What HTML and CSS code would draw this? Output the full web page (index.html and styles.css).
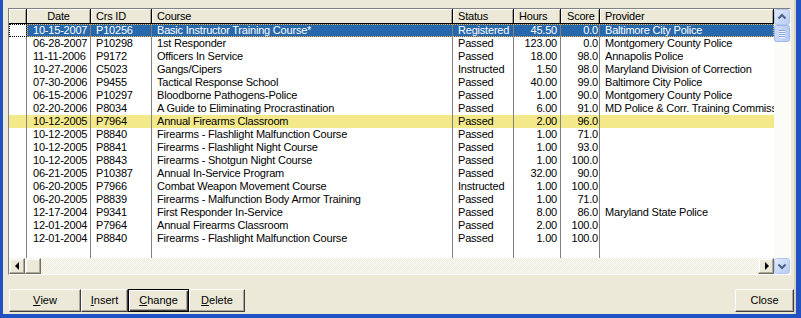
FILE: index.html
```html
<!DOCTYPE html>
<html>
<head>
<meta charset="utf-8">
<link rel="stylesheet" href="styles.css">
</head>
<body>
<div class="window">
  <div class="panel">
    <div class="grid">
      <div class="view">
        <div class="hdr">
          <div class="h w-ind"></div>
          <div class="h w-date center">Date</div>
          <div class="h w-id">Crs ID</div>
          <div class="h w-course">Course</div>
          <div class="h w-status">Status</div>
          <div class="h w-hours">Hours</div>
          <div class="h w-score">Score</div>
          <div class="h w-prov">Provider</div>
        </div>
        <div class="body">
          <div class="row sel"><div class="ind"></div><div class="data"><div class="c w-date">10-15-2007</div><div class="c w-id">P10256</div><div class="c w-course">Basic Instructor Training Course*</div><div class="c w-status">Registered</div><div class="c w-hours num">45.50</div><div class="c w-score num">0.0</div><div class="c w-prov">Baltimore City Police</div></div></div>
          <div class="row"><div class="ind"></div><div class="data"><div class="c w-date">06-28-2007</div><div class="c w-id">P10298</div><div class="c w-course">1st Responder</div><div class="c w-status">Passed</div><div class="c w-hours num">123.00</div><div class="c w-score num">0.0</div><div class="c w-prov">Montgomery County Police</div></div></div>
          <div class="row"><div class="ind"></div><div class="data"><div class="c w-date">11-11-2006</div><div class="c w-id">P9172</div><div class="c w-course">Officers In Service</div><div class="c w-status">Passed</div><div class="c w-hours num">18.00</div><div class="c w-score num">98.0</div><div class="c w-prov">Annapolis Police</div></div></div>
          <div class="row"><div class="ind"></div><div class="data"><div class="c w-date">10-27-2006</div><div class="c w-id">C5023</div><div class="c w-course">Gangs/Cipers</div><div class="c w-status">Instructed</div><div class="c w-hours num">1.50</div><div class="c w-score num">98.0</div><div class="c w-prov">Maryland Division of Correction</div></div></div>
          <div class="row"><div class="ind"></div><div class="data"><div class="c w-date">07-30-2006</div><div class="c w-id">P9455</div><div class="c w-course">Tactical Response School</div><div class="c w-status">Passed</div><div class="c w-hours num">40.00</div><div class="c w-score num">99.0</div><div class="c w-prov">Baltimore City Police</div></div></div>
          <div class="row"><div class="ind"></div><div class="data"><div class="c w-date">06-15-2006</div><div class="c w-id">P10297</div><div class="c w-course">Bloodborne Pathogens-Police</div><div class="c w-status">Passed</div><div class="c w-hours num">1.00</div><div class="c w-score num">90.0</div><div class="c w-prov">Montgomery County Police</div></div></div>
          <div class="row"><div class="ind"></div><div class="data"><div class="c w-date">02-20-2006</div><div class="c w-id">P8034</div><div class="c w-course">A Guide to Eliminating Procrastination</div><div class="c w-status">Passed</div><div class="c w-hours num">6.00</div><div class="c w-score num">91.0</div><div class="c w-prov">MD Police &amp; Corr. Training Commission</div></div></div>
          <div class="row hl"><div class="ind"></div><div class="data"><div class="c w-date">10-12-2005</div><div class="c w-id">P7964</div><div class="c w-course">Annual Firearms Classroom</div><div class="c w-status">Passed</div><div class="c w-hours num">2.00</div><div class="c w-score num">96.0</div><div class="c w-prov"></div></div></div>
          <div class="row"><div class="ind"></div><div class="data"><div class="c w-date">10-12-2005</div><div class="c w-id">P8840</div><div class="c w-course">Firearms - Flashlight Malfunction Course</div><div class="c w-status">Passed</div><div class="c w-hours num">1.00</div><div class="c w-score num">71.0</div><div class="c w-prov"></div></div></div>
          <div class="row"><div class="ind"></div><div class="data"><div class="c w-date">10-12-2005</div><div class="c w-id">P8841</div><div class="c w-course">Firearms - Flashlight Night Course</div><div class="c w-status">Passed</div><div class="c w-hours num">1.00</div><div class="c w-score num">93.0</div><div class="c w-prov"></div></div></div>
          <div class="row"><div class="ind"></div><div class="data"><div class="c w-date">10-12-2005</div><div class="c w-id">P8843</div><div class="c w-course">Firearms - Shotgun Night Course</div><div class="c w-status">Passed</div><div class="c w-hours num">1.00</div><div class="c w-score num">100.0</div><div class="c w-prov"></div></div></div>
          <div class="row"><div class="ind"></div><div class="data"><div class="c w-date">06-21-2005</div><div class="c w-id">P10387</div><div class="c w-course">Annual In-Service Program</div><div class="c w-status">Passed</div><div class="c w-hours num">32.00</div><div class="c w-score num">90.0</div><div class="c w-prov"></div></div></div>
          <div class="row"><div class="ind"></div><div class="data"><div class="c w-date">06-20-2005</div><div class="c w-id">P7966</div><div class="c w-course">Combat Weapon Movement Course</div><div class="c w-status">Instructed</div><div class="c w-hours num">1.00</div><div class="c w-score num">100.0</div><div class="c w-prov"></div></div></div>
          <div class="row"><div class="ind"></div><div class="data"><div class="c w-date">06-20-2005</div><div class="c w-id">P8839</div><div class="c w-course">Firearms - Malfunction Body Armor Training</div><div class="c w-status">Passed</div><div class="c w-hours num">1.00</div><div class="c w-score num">71.0</div><div class="c w-prov"></div></div></div>
          <div class="row"><div class="ind"></div><div class="data"><div class="c w-date">12-17-2004</div><div class="c w-id">P9341</div><div class="c w-course">First Responder In-Service</div><div class="c w-status">Passed</div><div class="c w-hours num">8.00</div><div class="c w-score num">86.0</div><div class="c w-prov">Maryland State Police</div></div></div>
          <div class="row"><div class="ind"></div><div class="data"><div class="c w-date">12-01-2004</div><div class="c w-id">P7964</div><div class="c w-course">Annual Firearms Classroom</div><div class="c w-status">Passed</div><div class="c w-hours num">2.00</div><div class="c w-score num">100.0</div><div class="c w-prov"></div></div></div>
          <div class="row"><div class="ind"></div><div class="data"><div class="c w-date">12-01-2004</div><div class="c w-id">P8840</div><div class="c w-course">Firearms - Flashlight Malfunction Course</div><div class="c w-status">Passed</div><div class="c w-hours num">1.00</div><div class="c w-score num">100.0</div><div class="c w-prov"></div></div></div>
          <div class="row fill"><div class="ind"></div><div class="data"><div class="c w-date"></div><div class="c w-id"></div><div class="c w-course"></div><div class="c w-status"></div><div class="c w-hours"></div><div class="c w-score"></div><div class="c w-prov"></div></div></div>
        </div>
      </div>
      <div class="vscroll">
        <svg class="xpbtn" width="16" height="16" viewBox="0 0 16 16">
          <defs><linearGradient id="gu" x1="0" y1="0" x2="1" y2="1"><stop offset="0" stop-color="#e3ebfd"/><stop offset="1" stop-color="#b4caf5"/></linearGradient></defs>
          <rect x="0.5" y="0.5" width="15" height="15" rx="2" fill="url(#gu)" stroke="#b1c5ee"/>
          <path d="M4.5 9.5 L8 6 L11.5 9.5" fill="none" stroke="#4d6185" stroke-width="2"/>
        </svg>
        <svg class="xpthumb" width="16" height="17" viewBox="0 0 16 17">
          <defs><linearGradient id="gt" x1="0" y1="0" x2="1" y2="0"><stop offset="0" stop-color="#cad9fa"/><stop offset="0.5" stop-color="#c4d5fa"/><stop offset="1" stop-color="#b2c8f4"/></linearGradient></defs>
          <rect x="0.5" y="0.5" width="15" height="16" rx="2" fill="url(#gt)" stroke="#9fb6e8"/>
          <path d="M5 5.5H11M5 7.5H11M5 9.5H11M5 11.5H11" stroke="#8ca6da"/>
          <path d="M5 6.5H11M5 8.5H11M5 10.5H11M5 12.5H11" stroke="#eef3fe"/>
        </svg>
        <div class="vtrack"></div>
        <svg class="xpbtn" width="16" height="16" viewBox="0 0 16 16">
          <defs><linearGradient id="gd" x1="0" y1="0" x2="1" y2="1"><stop offset="0" stop-color="#e3ebfd"/><stop offset="1" stop-color="#b4caf5"/></linearGradient></defs>
          <rect x="0.5" y="0.5" width="15" height="15" rx="2" fill="url(#gd)" stroke="#b1c5ee"/>
          <path d="M4.5 6.5 L8 10 L11.5 6.5" fill="none" stroke="#4d6185" stroke-width="2"/>
        </svg>
      </div>
      <div class="hscroll">
        <div class="sbtn"><span class="tri-left"></span></div>
        <div class="sbtn"></div>
        <div class="htrack"></div>
        <div class="sbtn"><span class="tri-right"></span></div>
      </div>
    </div>
    <div class="buttons">
      <div class="btn w-view"><u>V</u>iew</div>
      <div class="btn w-insert"><u>I</u>nsert</div>
      <div class="btn w-change default"><u>C</u>hange</div>
      <div class="btn w-delete"><u>D</u>elete</div>
      <div class="btn w-close">Close</div>
    </div>
  </div>
</div>
</body>
</html>
```

FILE: styles.css
```css
* { box-sizing: border-box; }
html, body { margin: 0; padding: 0; }
body {
  width: 801px;
  height: 318px;
  overflow: hidden;
  font-family: "Liberation Sans", Arial, sans-serif;
  font-size: 11px;
  color: #000;
}
.window {
  width: 801px;
  height: 318px;
  background: #2152c4;
  padding: 0 5px 4px 3px;
}
.panel {
  height: 314px;
  background: #ece9d8;
  padding: 8px 0 0 5px;
  box-shadow: inset -2px 0 0 #d6d2c2;
}
.grid {
  width: 783px;
  height: 267px;
  border: 1px solid;
  border-color: #808080 #ffffff #ffffff #808080;
  display: grid;
  grid-template-columns: 765px 16px;
  grid-template-rows: 249px 16px;
  background: #fff;
}
.view {
  grid-column: 1;
  grid-row: 1;
  display: flex;
  flex-direction: column;
  overflow: hidden;
}
.hdr {
  display: flex;
  height: 15px;
  flex: none;
}
.h {
  height: 15px;
  background: #ece9d8;
  border-right: 1px solid #000;
  border-bottom: 1px solid #000;
  box-shadow: inset 1px 1px 0 #fff, inset -1px 0 0 #aca899;
  padding: 1px 5px 0 5px;
  line-height: 13px;
  white-space: nowrap;
  overflow: hidden;
  letter-spacing: -0.2px;
}
.h.center { text-align: center; padding: 1px 0 0 0; }
.h.w-score { padding-left: 6px; }
.w-ind { width: 18px; flex: none; }
.w-date { width: 64px; flex: none; }
.w-id { width: 61px; flex: none; }
.w-course { width: 301px; flex: none; }
.w-status { width: 61px; flex: none; }
.w-hours { width: 47px; flex: none; }
.w-score { width: 39px; flex: none; }
.w-prov { width: 174px; flex: none; }
.body {
  flex: 1;
  display: flex;
  flex-direction: column;
}
.row {
  display: flex;
  height: 13px;
  flex: none;
  line-height: 13px;
}
.row.fill { flex: 1; }
.ind {
  width: 18px;
  flex: none;
  border-right: 1px solid #808080;
  background: #fff;
}
.data {
  display: flex;
  flex: 1;
}
.c {
  border-right: 1px solid #808080;
  padding: 0 5px;
  white-space: nowrap;
  overflow: hidden;
  letter-spacing: -0.2px;
}
.c.w-date { padding-left: 6px; }
.c.w-prov { border-right: none; }
.c.num { text-align: right; }
.c.w-hours { padding-right: 3px; }
.c.w-score { padding-right: 1px; }
.row.sel .data {
  background: #2767ab;
  color: #fff;
  outline: 1px dotted #f0b24a;
  outline-offset: -1px;
}
.row.sel .ind {
  outline: 1px dotted #000;
  outline-offset: -1px;
}
.row.hl { background: #f3e98b; }
.row.hl .ind { background: transparent; }
.vscroll {
  grid-column: 2;
  grid-row: 1 / 3;
  display: flex;
  flex-direction: column;
  background: #fbfbf8;
}
.xpbtn, .xpthumb { display: block; flex: none; }
.vtrack { flex: 1; }
.hscroll {
  grid-column: 1;
  grid-row: 2;
  display: flex;
}
.sbtn {
  width: 16px;
  height: 16px;
  flex: none;
  background: #ece9d8;
  border: 1px solid;
  border-color: #f4f3ee #716f64 #716f64 #f4f3ee;
  box-shadow: inset -1px -1px 0 #aca899, inset 1px 1px 0 #fff;
  display: flex;
  align-items: center;
  justify-content: center;
}
.htrack {
  flex: 1;
  background: repeating-conic-gradient(#ece9d8 0 25%, #ffffff 0 50%) 0 0 / 2px 2px;
}
.tri-left {
  width: 0; height: 0;
  border-top: 4px solid transparent;
  border-bottom: 4px solid transparent;
  border-right: 4px solid #000;
  margin-right: 1px;
}
.tri-right {
  width: 0; height: 0;
  border-top: 4px solid transparent;
  border-bottom: 4px solid transparent;
  border-left: 4px solid #000;
  margin-left: 1px;
}
.buttons {
  display: flex;
  margin-top: 14px;
  padding-left: 1px;
  padding-right: 2px;
}
.btn {
  height: 23px;
  background: #ece9d8;
  border: 1px solid;
  border-color: #ffffff #404040 #404040 #ffffff;
  box-shadow: inset -1px -1px 0 #aca899;
  display: flex;
  align-items: center;
  justify-content: center;
  line-height: 13px;
  flex: none;
}
.btn.default {
  border-color: #000;
  box-shadow: inset 1px 1px 0 #fff, inset -1px -1px 0 #404040, inset -2px -2px 0 #aca899;
}
.w-view { width: 72px; }
.w-insert { width: 47px; }
.w-change { width: 61px; }
.w-delete { width: 56px; }
.w-close { width: 59px; margin-left: auto; }
```
